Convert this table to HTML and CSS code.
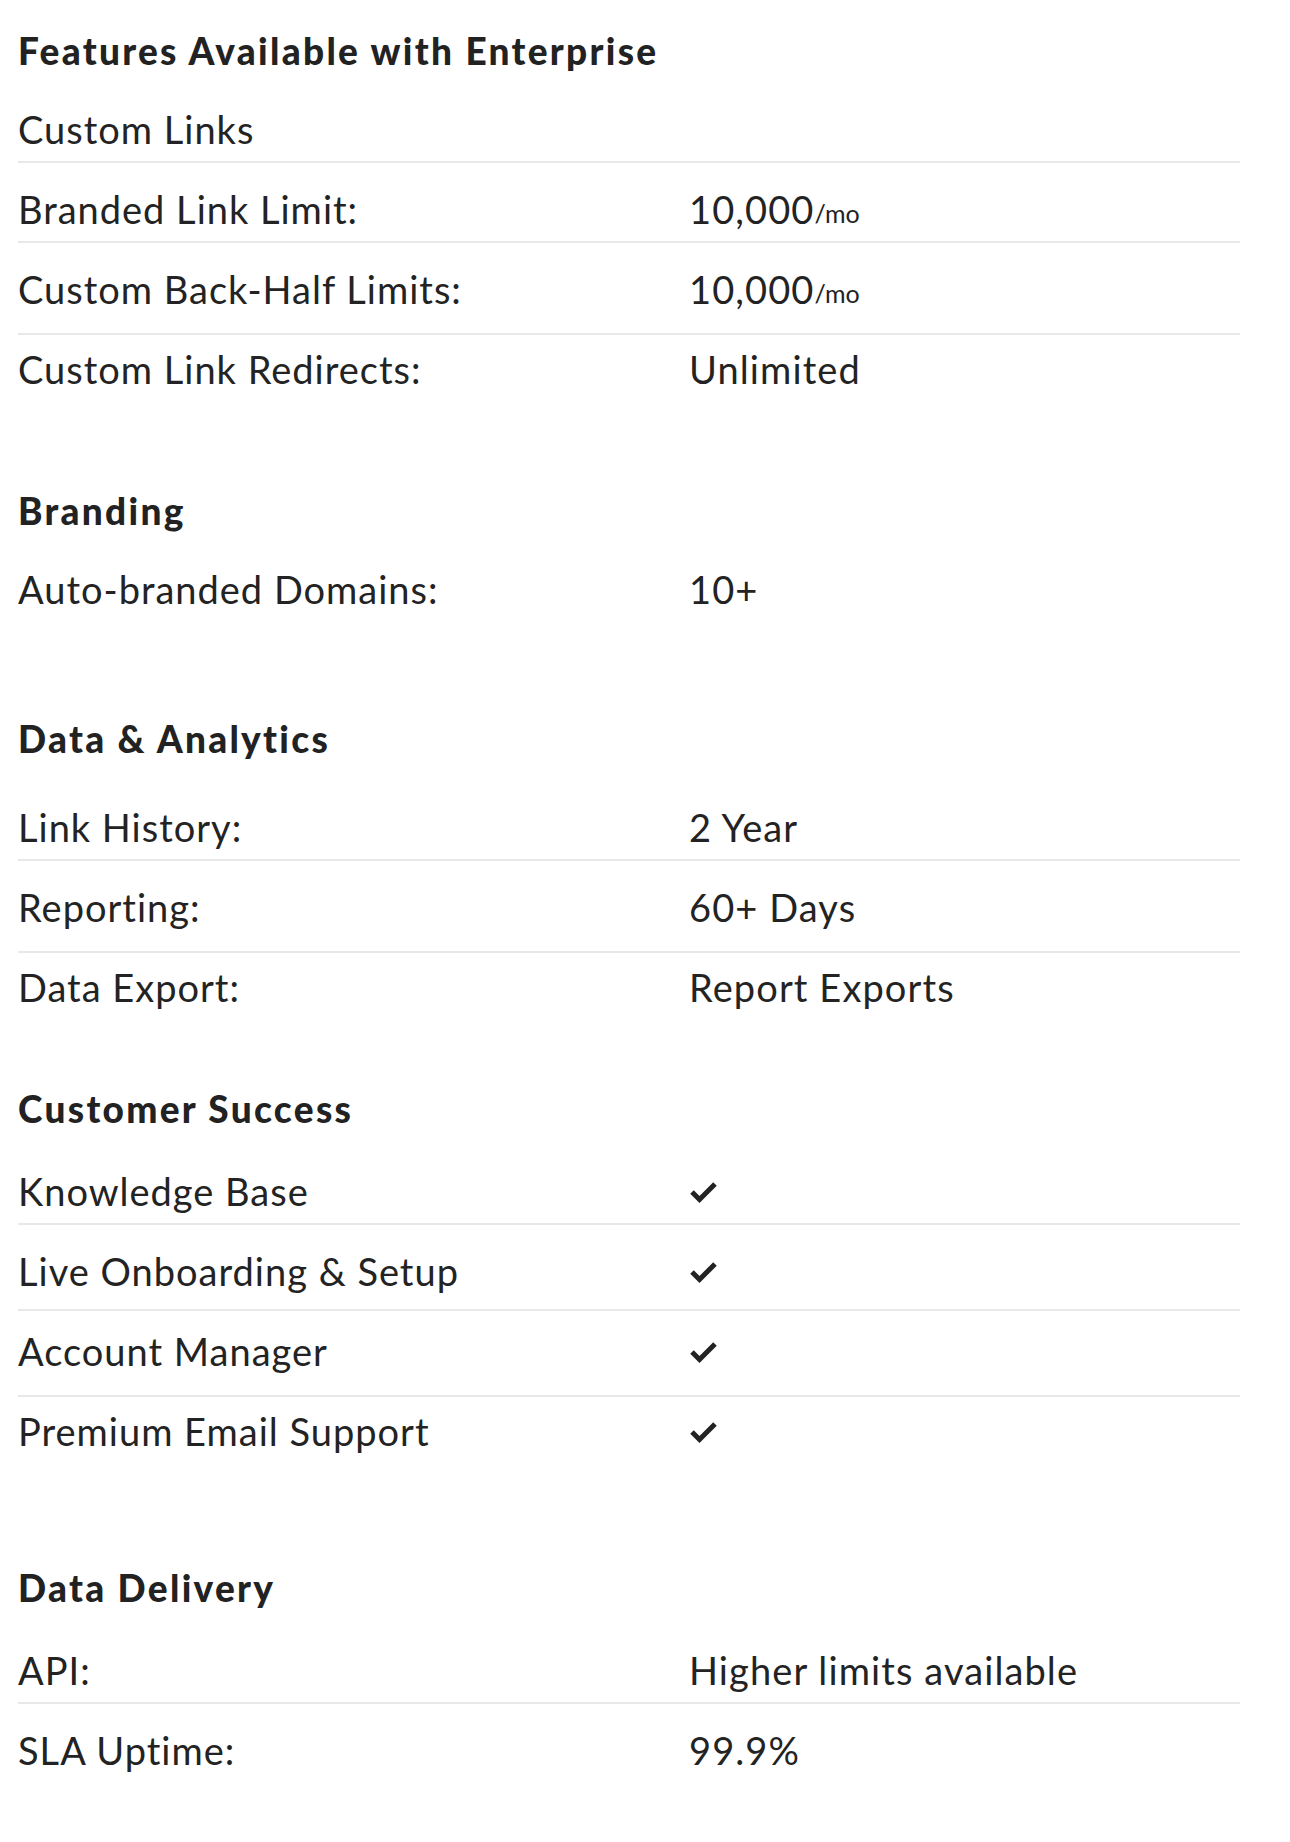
FILE: index.html
```html
<!DOCTYPE html>
<html lang="en">
<head>
<meta charset="utf-8">
<title>Features Available with Enterprise</title>
<link rel="stylesheet" href="styles.css">
</head>
<body>
<main class="features">
  <section class="section section--intro">
    <h2 class="section__title">Features Available with Enterprise</h2>
    <div class="row"><span class="row__label">Custom Links</span><span class="row__value"></span></div>
    <div class="row"><span class="row__label">Branded Link Limit:</span><span class="row__value">10,000<small class="unit">/mo</small></span></div>
    <div class="row row--deep"><span class="row__label">Custom Back-Half Limits:</span><span class="row__value">10,000<small class="unit">/mo</small></span></div>
    <div class="row"><span class="row__label">Custom Link Redirects:</span><span class="row__value">Unlimited</span></div>
  </section>

  <section class="section section--branding">
    <h2 class="section__title">Branding</h2>
    <div class="row"><span class="row__label">Auto-branded Domains:</span><span class="row__value">10+</span></div>
  </section>

  <section class="section section--data">
    <h2 class="section__title">Data &amp; Analytics</h2>
    <div class="row"><span class="row__label">Link History:</span><span class="row__value">2 Year</span></div>
    <div class="row row--deep"><span class="row__label">Reporting:</span><span class="row__value">60+ Days</span></div>
    <div class="row"><span class="row__label">Data Export:</span><span class="row__value">Report Exports</span></div>
  </section>

  <section class="section section--success">
    <h2 class="section__title">Customer Success</h2>
    <div class="row"><span class="row__label">Knowledge Base</span><span class="row__value"><svg class="check" viewBox="0 0 31 25" width="31" height="25" aria-label="Included"><polyline points="4,13 11.5,20.5 27,5" /></svg></span></div>
    <div class="row row--mid"><span class="row__label">Live Onboarding &amp; Setup</span><span class="row__value"><svg class="check" viewBox="0 0 31 25" width="31" height="25" aria-label="Included"><polyline points="4,13 11.5,20.5 27,5" /></svg></span></div>
    <div class="row row--deep"><span class="row__label">Account Manager</span><span class="row__value"><svg class="check" viewBox="0 0 31 25" width="31" height="25" aria-label="Included"><polyline points="4,13 11.5,20.5 27,5" /></svg></span></div>
    <div class="row"><span class="row__label">Premium Email Support</span><span class="row__value"><svg class="check" viewBox="0 0 31 25" width="31" height="25" aria-label="Included"><polyline points="4,13 11.5,20.5 27,5" /></svg></span></div>
  </section>

  <section class="section section--delivery">
    <h2 class="section__title">Data Delivery</h2>
    <div class="row"><span class="row__label">API:</span><span class="row__value">Higher limits available</span></div>
    <div class="row"><span class="row__label">SLA Uptime:</span><span class="row__value">99.9%</span></div>
  </section>
</main>
</body>
</html>
```

FILE: styles.css
```css
html, body {
  margin: 0;
  padding: 0;
  background: #ffffff;
}

body {
  font-family: Lato, "Noto Sans", "Liberation Sans", sans-serif;
  color: #232323;
}

.features {
  width: 1222px;
  margin-left: 18px;
  padding-top: 31px;
  padding-bottom: 40px;
}

.section__title {
  margin: 0 0 16px;
  font-size: 37px;
  line-height: 40px;
  font-weight: 900;
  letter-spacing: 2.3px;
  color: #222222;
}

.section--intro .section__title { margin-bottom: 12px; }
.section--branding .section__title { margin-bottom: 12px; }
.section--data .section__title { margin-bottom: 22px; }

.section--branding { margin-top: 90px; }
.section--data { margin-top: 98px; }
.section--success { margin-top: 70px; }
.section--delivery { margin-top: 105px; }

.row {
  display: grid;
  grid-template-columns: 671px 1fr;
  padding: 26px 0 12px;
  border-bottom: 2px solid #e8e8e8;
  font-size: 38px;
  line-height: 40px;
}

.row:last-child {
  border-bottom: 0;
}

/* rows whose divider sits lower under the text */
.row--deep { padding-bottom: 24px; }
.row--deep + .row { padding-top: 14px; }
.row--mid { padding-bottom: 18px; }
.row--mid + .row { padding-top: 20px; }

.row__label {
  letter-spacing: 1px;
}

.row__value {
  display: flex;
  align-items: center;
  min-height: 40px;
  letter-spacing: 1.1px;
}

.unit {
  font-size: 25px;
  letter-spacing: 0;
  align-self: flex-end;
  line-height: 32px;
}

.check {
  display: block;
  margin-left: -1px;
}

.check polyline {
  fill: none;
  stroke: #232323;
  stroke-width: 5;
  stroke-linecap: butt;
  stroke-linejoin: miter;
}
```
